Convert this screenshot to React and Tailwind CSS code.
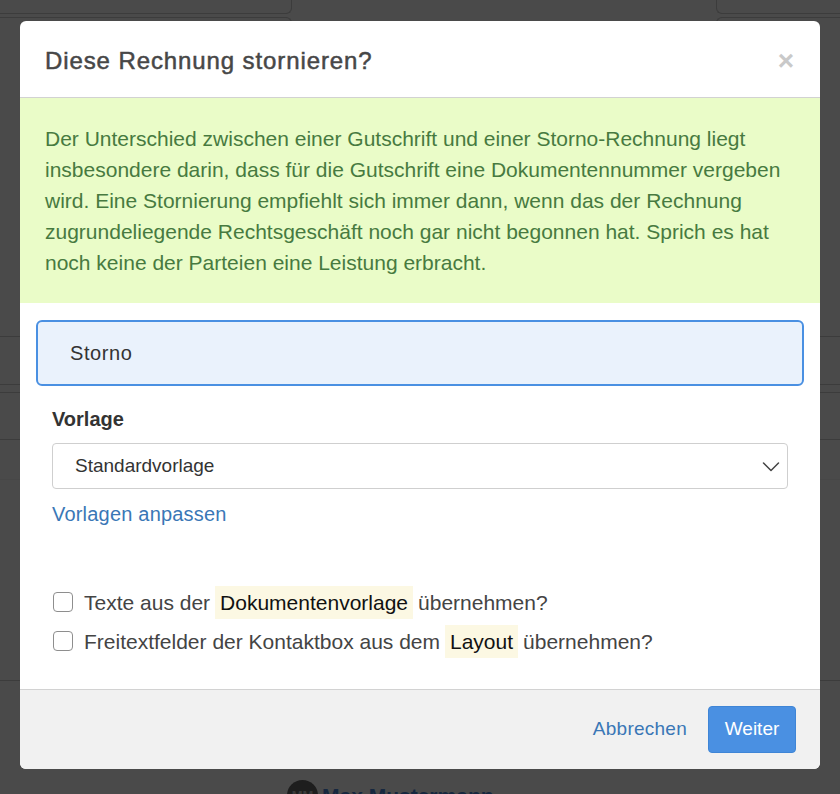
import React from "react";

// Faint table rows of the page that sits behind the dialog backdrop
const BackdropPage = () => (
  <div className="absolute inset-0 flex flex-col">
    <div className="flex h-[14px] justify-between">
      <div className="w-[292px] rounded-br-[6px] border-b border-r border-[#3c3c3c]"></div>
      <div className="w-[124px] rounded-bl-[6px] border-b border-l border-[#3c3c3c]"></div>
    </div>
    <div className="flex h-[323px] justify-between border-b border-[#3c3c3c] pt-[3px]">
      <div className="h-[40px] w-[292px] rounded-tr-[6px] border-t border-r border-[#3c3c3c]"></div>
      <div className="h-[40px] w-[124px] rounded-tl-[6px] border-t border-l border-[#3c3c3c]"></div>
    </div>
    <div className="h-[48px] border-b border-[#3c3c3c]"></div>
    <div className="h-[8px] border-b border-[#3c3c3c]"></div>
    <div className="h-[47px] border-b border-[#3c3c3c]"></div>
    <div className="h-[40px] border-b border-[#474747]"></div>
    <div className="h-[201px] border-b border-[#3c3c3c]"></div>
    <div className="flex flex-1 items-end pl-[287px]">
      <div className="flex translate-y-[17px] items-center gap-[4px]">
        <div className="flex h-[31px] w-[31px] items-center justify-center rounded-full bg-[#1e1e1e] text-[13px] font-bold text-[#3a3a3a]">
          MM
        </div>
        <span className="text-[21px] font-bold text-[#16273f]">Max Mustermann</span>
      </div>
    </div>
  </div>
);

const Checkbox = () => (
  <span className="block h-[20px] w-[20px] shrink-0 rounded-[4px] border border-[#8e8e8e] bg-white"></span>
);

const Highlight = ({ children }) => (
  <span className="mx-[5px] inline-block bg-[#fcf8e3] px-[5px] leading-[33px] text-[#111]">{children}</span>
);

export default function App() {
  return (
    <div
      className="relative h-[794px] w-full overflow-hidden bg-[#4a4a4a]"
      style={{ fontFamily: "'Liberation Sans', Arial, sans-serif" }}
    >
      <BackdropPage />

      <div className="relative z-10 px-[20px] pt-[21px]">
        <div className="w-[800px] overflow-hidden rounded-[6px] bg-white">
          {/* Header */}
          <div className="flex h-[77px] items-center justify-between border-b border-[#d2d2d2] pl-[25px] pr-[26px] pt-[4px]">
            <h2 className="text-[24px] tracking-[0.9px] text-[#474747] [-webkit-text-stroke:0.5px_#474747]">
              Diese Rechnung stornieren?
            </h2>
            <span className="text-[28px] font-bold leading-none text-[#c9c9c9]">×</span>
          </div>

          {/* Info box */}
          <div className="bg-[#eafcc8] px-[25px] py-[25px] text-[21px] leading-[31px] text-[#477a40]">
            Der Unterschied zwischen einer Gutschrift und einer Storno-Rechnung liegt
            insbesondere darin, dass für die Gutschrift eine Dokumentennummer vergeben
            wird. Eine Stornierung empfiehlt sich immer dann, wenn das der Rechnung
            zugrundeliegende Rechtsgeschäft noch gar nicht begonnen hat. Sprich es hat
            noch keine der Parteien eine Leistung erbracht.
          </div>

          {/* Body */}
          <div className="px-[16px] pt-[17px] pb-[31px]">
            <div className="flex h-[66px] items-center rounded-[6px] border-2 border-[#4a90e2] bg-[#eaf2fc] pl-[32px] text-[20px] tracking-[0.6px] text-[#333]">
              Storno
            </div>

            <div className="px-[16px]">
              <label className="mt-[21px] block text-[20px] font-bold leading-[24px] text-[#333]">Vorlage</label>
              <div className="mt-[12px] flex h-[46px] items-center justify-between rounded-[4px] border border-[#cfcfcf] pl-[22px] pr-[7px] text-[19px] text-[#333]">
                <span>Standardvorlage</span>
                <svg className="h-[18px] w-[18px] text-[#444]" fill="none" stroke="currentColor" viewBox="0 0 24 24">
                  <path strokeLinecap="round" strokeLinejoin="round" strokeWidth={2} d="M2 8l10 10 10-10" />
                </svg>
              </div>
              <a className="mt-[13px] block text-[20px] leading-[24px] tracking-[0.2px] text-[#3a77b6]">Vorlagen anpassen</a>

              <div className="mt-[59px] flex flex-col gap-[5px] text-[21px] text-[#444]">
                <label className="flex h-[34px] items-center">
                  <span className="pl-[1px]"><Checkbox /></span>
                  <span className="ml-[11px]">
                    Texte aus der<Highlight>Dokumentenvorlage</Highlight>übernehmen?
                  </span>
                </label>
                <label className="flex h-[34px] items-center">
                  <span className="pl-[1px]"><Checkbox /></span>
                  <span className="ml-[11px]">
                    Freitextfelder der Kontaktbox aus dem<Highlight>Layout</Highlight>übernehmen?
                  </span>
                </label>
              </div>
            </div>
          </div>

          {/* Footer */}
          <div className="flex h-[80px] items-center justify-end gap-[21px] border-t border-[#d2d2d2] bg-[#f1f1f1] pr-[24px]">
            <button className="text-[19px] tracking-[0.25px] text-[#3a77b6]">Abbrechen</button>
            <button className="h-[47px] w-[88px] rounded-[4px] border border-[#3f85d6] bg-[#4a90e2] text-[19px] text-white">
              Weiter
            </button>
          </div>
        </div>
      </div>
    </div>
  );
}
